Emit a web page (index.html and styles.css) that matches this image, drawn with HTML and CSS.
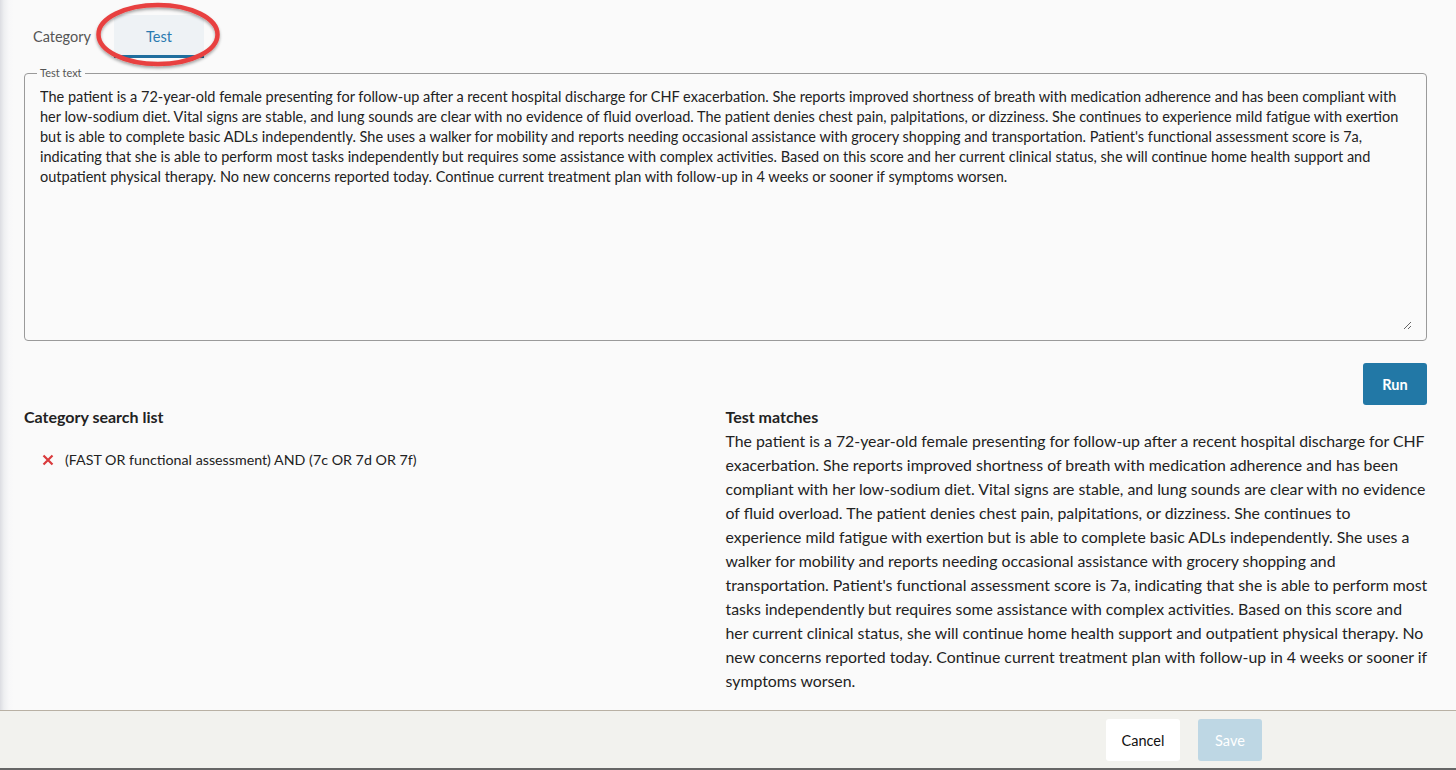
FILE: index.html
```html
<!DOCTYPE html>
<html lang="en">
<head>
<meta charset="utf-8">
<title>Test</title>
<link rel="stylesheet" href="styles.css">
</head>
<body>
<div class="page">
  <main class="main">
    <div class="tabs">
      <button class="tab">Category</button>
      <button class="tab tab-active">Test</button>
      <svg class="annot" width="140" height="80" viewBox="0 0 140 80">
        <defs>
          <filter id="sh" x="-20%" y="-20%" width="140%" height="160%">
            <feDropShadow dx="0" dy="2" stdDeviation="1.5" flood-color="#000" flood-opacity="0.35"/>
          </filter>
        </defs>
        <ellipse cx="70" cy="38.5" rx="59.5" ry="29.5" fill="none" stroke="#e8403f" stroke-width="4.5" filter="url(#sh)"/>
      </svg>
    </div>

    <fieldset class="field">
      <legend class="legend">Test text</legend>
      <textarea class="ta">The patient is a 72-year-old female presenting for follow-up after a recent hospital discharge for CHF exacerbation. She reports improved shortness of breath with medication adherence and has been compliant with her low-sodium diet. Vital signs are stable, and lung sounds are clear with no evidence of fluid overload. The patient denies chest pain, palpitations, or dizziness. She continues to experience mild fatigue with exertion but is able to complete basic ADLs independently. She uses a walker for mobility and reports needing occasional assistance with grocery shopping and transportation. Patient's functional assessment score is 7a, indicating that she is able to perform most tasks independently but requires some assistance with complex activities. Based on this score and her current clinical status, she will continue home health support and outpatient physical therapy. No new concerns reported today. Continue current treatment plan with follow-up in 4 weeks or sooner if symptoms worsen.</textarea>
    </fieldset>

    <div class="run-row">
      <button class="btn-run">Run</button>
    </div>

    <div class="results">
      <section class="col">
        <h3 class="col-title">Category search list</h3>
        <ul class="rules">
          <li class="rule">
            <svg class="x-icon" width="12" height="12" viewBox="0 0 12 12"><path d="M1.5 1.5 L10.5 10.5 M10.5 1.5 L1.5 10.5" stroke="#d93a3c" stroke-width="2.2" stroke-linecap="butt"/></svg>
            <span>(FAST OR functional assessment) AND (7c OR 7d OR 7f)</span>
          </li>
        </ul>
      </section>
      <section class="col">
        <h3 class="col-title">Test matches</h3>
        <p class="matches">The patient is a 72-year-old female presenting for follow-up after a recent hospital discharge for CHF exacerbation. She reports improved shortness of breath with medication adherence and has been compliant with her low-sodium diet. Vital signs are stable, and lung sounds are clear with no evidence of fluid overload. The patient denies chest pain, palpitations, or dizziness. She continues to experience mild fatigue with exertion but is able to complete basic ADLs independently. She uses a walker for mobility and reports needing occasional assistance with grocery shopping and transportation. Patient's functional assessment score is 7a, indicating that she is able to perform most tasks independently but requires some assistance with complex activities. Based on this score and her current clinical status, she will continue home health support and outpatient physical therapy. No new concerns reported today. Continue current treatment plan with follow-up in 4 weeks or sooner if symptoms worsen.</p>
      </section>
    </div>
  </main>

  <footer class="footer">
    <button class="btn-cancel">Cancel</button>
    <button class="btn-save" disabled>Save</button>
  </footer>
</div>
</body>
</html>
```

FILE: styles.css
```css
html, body {
  margin: 0;
  padding: 0;
  height: 100%;
}
body {
  font-family: Lato, "Open Sans", sans-serif;
  color: #222;
  background: #fafafa;
  overflow: hidden;
}
.page {
  height: 100vh;
  display: flex;
  flex-direction: column;
  background: linear-gradient(to right, #dcdde2 0, #eeeff1 4px, #f8f8f9 9px, #fafafa 14px);
}
.main {
  flex: 1;
  min-height: 0;
  overflow: hidden;
  padding: 0 29px 0 24px;
}
.tabs {
  position: relative;
  display: flex;
  gap: 7px;
  margin-top: 15px;
  margin-left: -7px;
}
.tab {
  font-family: Lato, sans-serif;
  font-size: 14.5px;
  color: #555;
  background: transparent;
  border: 0;
  border-bottom: 3px solid transparent;
  height: 43px;
  min-width: 90px;
  padding: 3px 16px 0;
  cursor: pointer;
}
.tab-active {
  color: #2a7ab0;
  background: #eef2f5;
  border-bottom-color: #1f6e9e;
}
.annot {
  position: absolute;
  left: 70.5px;
  top: -19px;
  pointer-events: none;
}
.field {
  margin: 9px 0 0 0;
  border: 1px solid #9a9a9a;
  border-radius: 4px;
  padding: 0 14px 10px 15px;
}
.legend {
  font-size: 11px;
  line-height: 12px;
  color: #555;
  padding: 0 3px;
  margin-left: -3px;
}
.ta {
  display: block;
  box-sizing: border-box;
  width: 100%;
  height: 251px;
  border: 0;
  outline: none;
  background: transparent;
  resize: vertical;
  padding: 8px 0 0 0;
  margin: 0;
  font-family: Lato, sans-serif;
  font-size: 14.5px;
  line-height: 20px;
  color: #222;
  overflow: hidden;
}
.run-row {
  display: flex;
  justify-content: flex-end;
  margin-top: 22px;
}
.btn-run {
  width: 64px;
  height: 42px;
  border: 0;
  border-radius: 3px;
  background: #2278a6;
  color: #fff;
  font-family: Lato, sans-serif;
  font-weight: 700;
  font-size: 14.5px;
}
.results {
  display: grid;
  grid-template-columns: 701.5px 1fr;
  margin-right: -1.5px;
}
.col-title {
  margin: 0;
  font-size: 16px;
  font-weight: 700;
  line-height: 24px;
  color: #222;
}
.rules {
  list-style: none;
  margin: 0;
  padding: 19px 0 0 18px;
}
.rule {
  display: flex;
  align-items: center;
  gap: 11px;
  font-size: 14.25px;
  line-height: 24px;
  color: #222;
}
.x-icon {
  flex: none;
}
.matches {
  margin: 0;
  font-size: 15.85px;
  line-height: 24px;
  color: #222;
}
.footer {
  flex: none;
  height: 57px;
  border-top: 1px solid #b9b1a4;
  border-bottom: 2px solid #666;
  background: #f2f2ee;
  display: flex;
  justify-content: flex-end;
  align-items: center;
  gap: 18px;
  padding-right: 194px;
}
.btn-cancel, .btn-save {
  height: 42px;
  border: 0;
  border-radius: 3px;
  padding: 2px 0 0;
  font-family: Lato, sans-serif;
  font-size: 14.5px;
}
.btn-cancel {
  width: 74px;
  background: #fff;
  color: #111;
}
.btn-save {
  width: 64px;
  background: #bed7e4;
  color: #fff;
}
```
